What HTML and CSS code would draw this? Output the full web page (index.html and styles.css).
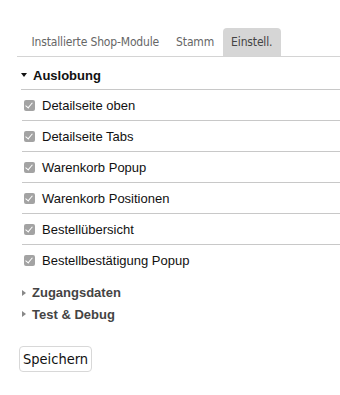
FILE: index.html
```html
<!DOCTYPE html>
<html lang="de">
<head>
  <meta charset="UTF-8">
  <meta name="viewport" content="width=device-width, initial-scale=1.0">
  <title>Einstellungen</title>
  <link rel="stylesheet" href="styles.css">
</head>
<body>
  <ul class="tabs">
    <li>Installierte Shop-Module</li>
    <li>Stamm</li>
    <li class="active">Einstell.</li>
  </ul>

  <div class="section open">
    <div class="head"><span class="arrow"></span>Auslobung</div>
    <ul class="options">
      <li><span class="check"></span>Detailseite oben</li>
      <li><span class="check"></span>Detailseite Tabs</li>
      <li><span class="check"></span>Warenkorb Popup</li>
      <li><span class="check"></span>Warenkorb Positionen</li>
      <li><span class="check"></span>Bestellübersicht</li>
      <li><span class="check"></span>Bestellbestätigung Popup</li>
    </ul>
  </div>
  <div class="section closed">
    <div class="head"><span class="arrow"></span>Zugangsdaten</div>
  </div>
  <div class="section closed">
    <div class="head"><span class="arrow"></span>Test &amp; Debug</div>
  </div>

  <button class="save">Speichern</button>
</body>
</html>
```

FILE: styles.css
```css
body {
  margin: 0;
  padding: 28px 0 0 0;
  font-family: "Liberation Sans", Arial, sans-serif;
  font-size: 13px;
  color: #111;
  background: #fff;
}
.tabs {
  list-style: none;
  margin: 0 0 0 17px;
  padding: 0 0 0 6px;
  display: flex;
  border-bottom: 1px solid #d4d4d4;
}
.tabs li {
  font-family: "DejaVu Sans Condensed", "Liberation Sans", sans-serif;
  font-size: 12px;
  letter-spacing: -0.15px;
  color: #666;
  height: 28px;
  line-height: 28px;
  padding: 0 8.5px;
  border-radius: 4px 4px 0 0;
}
.tabs li.active {
  background: #d6d6d6;
  color: #444;
}
.section {
  margin-left: 21px;
}
.head {
  font-weight: bold;
  display: flex;
  align-items: center;
}
.arrow {
  width: 0;
  height: 0;
  margin-right: 6px;
}
.open .head {
  height: 28px;
  padding-top: 4px;
  border-bottom: 1px solid #c8c8c8;
}
.open .arrow {
  border-left: 3px solid transparent;
  border-right: 3px solid transparent;
  border-top: 4px solid #111;
}
.closed .head {
  height: 21px;
  color: #444;
}
.closed .arrow {
  border-top: 3px solid transparent;
  border-bottom: 3px solid transparent;
  border-left: 4px solid #888;
  margin-left: 1px;
}
.open + .closed {
  margin-top: 7px;
}
.closed + .closed .head {
  height: 22px;
}
.options {
  list-style: none;
  margin: 0 0 0 1px;
  padding: 0;
}
.options li {
  height: 30px;
  display: flex;
  align-items: center;
  border-bottom: 1px solid #c8c8c8;
}
.options li:last-child {
  border-bottom: none;
}
.check {
  width: 11px;
  height: 11px;
  border-radius: 2px;
  background: #a3a3a3;
  margin: 0 7px 0 2px;
  position: relative;
}
.check::after {
  content: "";
  position: absolute;
  left: 3px;
  top: 1px;
  width: 3px;
  height: 6px;
  border: solid #fff;
  border-width: 0 1.5px 1.5px 0;
  transform: rotate(40deg);
}
.save {
  margin: 21px 0 0 19px;
  height: 26px;
  padding: 0 3px;
  font-family: "DejaVu Sans Condensed", "Liberation Sans", sans-serif;
  font-size: 14.5px;
  color: #111;
  background: #fff;
  border: 1px solid #d8d8d8;
  border-radius: 4px;
}
```
